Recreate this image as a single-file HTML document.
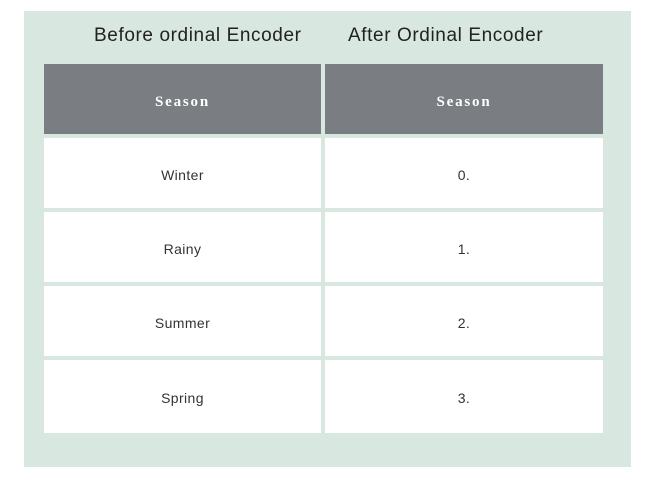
<!DOCTYPE html>
<html><head><style>
body{margin:0;background:#fff;width:655px;height:485px;position:relative;font-family:"Liberation Sans",sans-serif}
.panel{position:absolute;left:24px;top:11px;width:607px;height:456px;background:#d8e7df}
.t{position:absolute;top:25px;font-size:19px;letter-spacing:0.6px;color:#222}
.c{position:absolute;display:flex;align-items:center;justify-content:center;background:#fff;font-size:14px;letter-spacing:0.4px;color:#333;padding-top:3px;box-sizing:border-box}
.h{background:#7a7e82;color:#fff;font-family:"Liberation Serif",serif;font-weight:bold;letter-spacing:1.8px;font-size:15px;padding-top:6px}
</style></head><body>
<div class="panel"></div>
<div class="t" style="left:94px">Before ordinal Encoder</div>
<div class="t" style="left:348px">After Ordinal Encoder</div>
<div class="c h" style="left:44px;top:64px;width:277px;height:70px">Season</div>
<div class="c h" style="left:325px;top:64px;width:278px;height:70px">Season</div>
<div class="c" style="left:44px;top:138px;width:277px;height:70px">Winter</div>
<div class="c" style="left:325px;top:138px;width:278px;height:70px">0.</div>
<div class="c" style="left:44px;top:212px;width:277px;height:70px">Rainy</div>
<div class="c" style="left:325px;top:212px;width:278px;height:70px">1.</div>
<div class="c" style="left:44px;top:286px;width:277px;height:70px">Summer</div>
<div class="c" style="left:325px;top:286px;width:278px;height:70px">2.</div>
<div class="c" style="left:44px;top:360px;width:277px;height:73px">Spring</div>
<div class="c" style="left:325px;top:360px;width:278px;height:73px">3.</div>
</body></html>
